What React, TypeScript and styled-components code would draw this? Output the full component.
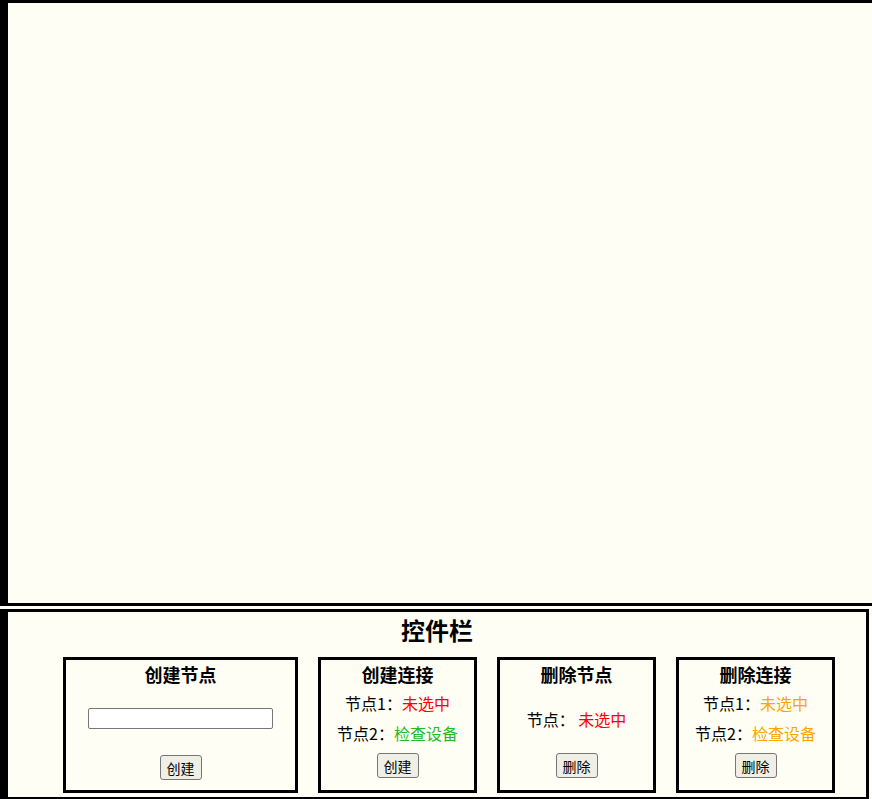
import React from "react";
import styled, { createGlobalStyle } from "styled-components";

const BG = "#fefef4";

const Global = createGlobalStyle`
  html, body {
    margin: 0;
    padding: 0;
    background: ${BG};
    overflow: hidden;
  }
  body {
    font-family: "Noto Sans CJK SC", "Noto Sans", sans-serif;
    color: #000;
  }
`;

const Page = styled.div`
  display: flex;
  flex-direction: column;
  width: 872px;
  height: 799px;
`;

const Canvas = styled.div`
  box-sizing: border-box;
  height: 606px;
  width: 100%;
  border-top: 3px solid #000;
  border-bottom: 3px solid #000;
  border-left: 8px solid #000;
  background: ${BG};
`;

const Panel = styled.div`
  box-sizing: border-box;
  margin-top: 3px;
  width: 869px;
  height: 190px;
  border-top: 3px solid #000;
  border-left: 8px solid #000;
  border-right: 3px solid #000;
  border-bottom: 2px solid #000;
  display: flex;
  flex-direction: column;
`;

const PanelTitle = styled.h2`
  margin: 0;
  font-size: 24px;
  line-height: 35px;
  font-weight: 700;
  text-align: center;
`;

const Boxes = styled.div`
  display: flex;
  gap: 20px;
  padding-left: 55px;
  margin-top: 10px;
`;

const Box = styled.div<{ $w: number }>`
  box-sizing: border-box;
  width: ${(p) => p.$w}px;
  height: 136px;
  border: 3px solid #000;
  display: flex;
  flex-direction: column;
  align-items: center;
`;

const BoxTitle = styled.h3`
  margin: 0;
  font-size: 18px;
  line-height: 28px;
  font-weight: 700;
`;

const Row = styled.div<{ $mt?: number }>`
  font-size: 16px;
  line-height: 30px;
  margin-top: ${(p) => p.$mt ?? 0}px;
  white-space: pre;
`;

const Val = styled.span<{ $c: string }>`
  color: ${(p) => p.$c};
`;

const TextInput = styled.input`
  box-sizing: border-box;
  width: 185px;
  height: 21px;
  margin: 20px 0 0;
  padding: 1px 2px;
  border: 1px solid #767676;
  border-radius: 2px;
  background: #fff;
  font-size: 13px;
`;

const Button = styled.button<{ $mt: number }>`
  box-sizing: border-box;
  margin-top: ${(p) => p.$mt}px;
  height: 25px;
  padding: 0 6px;
  border: 1px solid #767676;
  border-radius: 3px;
  background: #efefe6;
  font-family: "Noto Sans CJK SC", sans-serif;
  font-size: 14px;
  line-height: 20px;
  color: #000;
`;

const RED = "#ff0000";
const GREEN = "#22bb22";
const ORANGE = "#ffa500";

export default function App() {
  return (
    <>
      <Global />
      <Page>
        <Canvas />
        <Panel>
          <PanelTitle>控件栏</PanelTitle>
          <Boxes>
            <Box $w={235}>
              <BoxTitle>创建节点</BoxTitle>
              <TextInput type="text" />
              <Button $mt={26}>创建</Button>
            </Box>
            <Box $w={159}>
              <BoxTitle>创建连接</BoxTitle>
              <Row>
                节点1：<Val $c={RED}>未选中</Val>
              </Row>
              <Row>
                节点2：<Val $c={GREEN}>检查设备</Val>
              </Row>
              <Button $mt={5}>创建</Button>
            </Box>
            <Box $w={159}>
              <BoxTitle>删除节点</BoxTitle>
              <Row $mt={16}>
                节点： <Val $c={RED}>未选中</Val>
              </Row>
              <Button $mt={19}>删除</Button>
            </Box>
            <Box $w={159}>
              <BoxTitle>删除连接</BoxTitle>
              <Row>
                节点1：<Val $c={ORANGE}>未选中</Val>
              </Row>
              <Row>
                节点2：<Val $c={ORANGE}>检查设备</Val>
              </Row>
              <Button $mt={5}>删除</Button>
            </Box>
          </Boxes>
        </Panel>
      </Page>
    </>
  );
}
